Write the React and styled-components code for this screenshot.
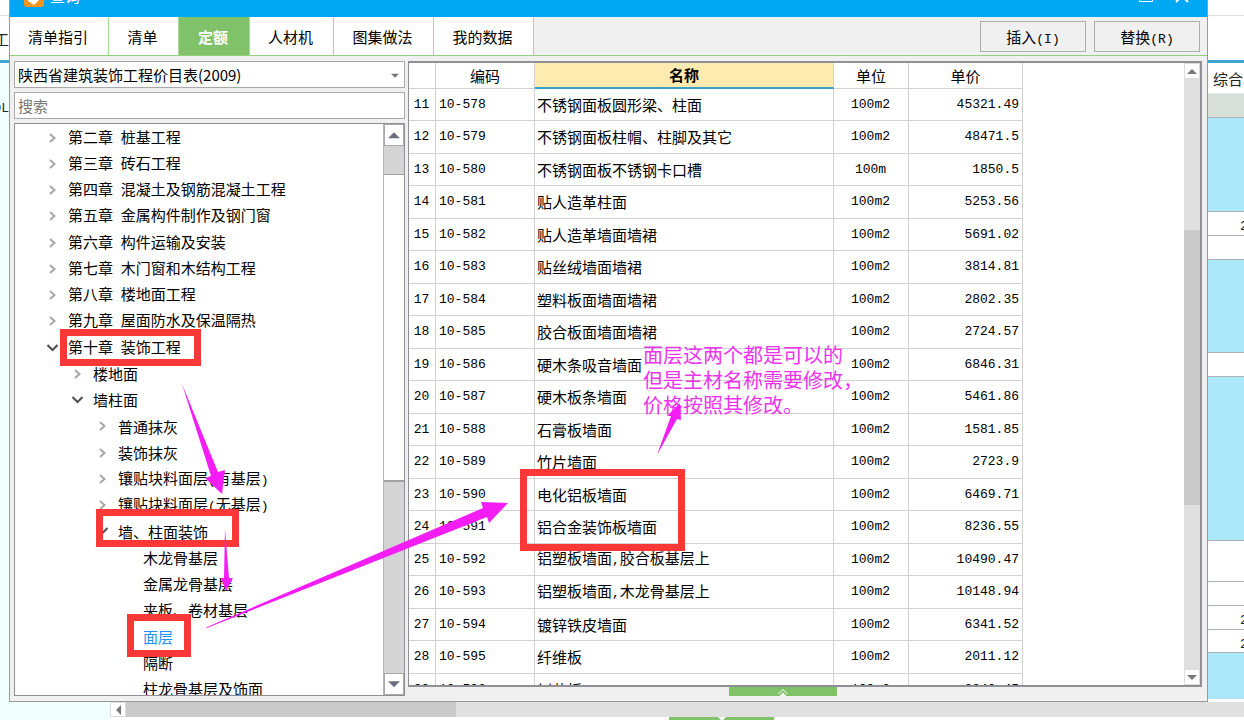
import React from "react";
import styled, { createGlobalStyle } from "styled-components";

const Global = createGlobalStyle`
  * { box-sizing: border-box; }
  body { margin: 0; background: #fff; }
  body, button, input, select {
    font-family: "Noto Sans CJK SC", sans-serif;
    font-size: 15px;
    color: #000;
  }
  button { cursor: pointer; }
`;

const Page = styled.div`
  position: relative;
  display: flex;
  flex-direction: column;
  height: 100vh;
  overflow: hidden;
`;
const Stage = styled.div`
  flex: 1;
  min-height: 0;
  display: grid;
  grid-template-columns: 9px minmax(0, 1fr) 36px;
`;

/* Application window behind the dialog */
const Strip = styled.aside`
  display: flex;
  flex-direction: column;
  overflow: hidden;
  white-space: nowrap;
`;
const StripCell = styled.div`
  flex: none;
  height: ${(p) => p.$h}px;
  background: ${(p) => p.$bg || "#fff"};
  border-bottom: ${(p) => p.$line || 1}px solid ${(p) => p.$edge || "#aab4b4"};
  display: flex;
  align-items: center;
  justify-content: ${(p) => p.$align || "flex-start"};
  padding-left: ${(p) => p.$indent || 0}px;
  color: #222;
`;
const Mono = styled.span`
  font-family: "Liberation Mono", monospace;
  font-size: 13px;
`;
const PageBottom = styled.footer`
  flex: none;
  height: 18px;
  padding-left: 110px;
  background: #f0ffff;
`;
const HScroll = styled.div`
  display: flex;
  height: 15px;
  background: #e0e0e0;
`;
const HThumb = styled.div`
  width: 330px;
  background: #cacaca;
`;
const BottomEdge = styled.div`
  display: flex;
  height: 4px;
  background: #fff;
  padding-left: 559px;
`;

/* Dialog */
const Dialog = styled.main`
  display: flex;
  flex-direction: column;
  min-height: 0;
  background: #f0f0f0;
  border: solid #999;
  border-width: 0 1px 1px;
`;
const TitleBar = styled.header`
  flex: none;
  display: flex;
  align-items: flex-end;
  justify-content: space-between;
  height: 17px;
  padding: 0 18px 10px 14px;
  background: #00a8f3;
  color: #fff;
  overflow: hidden;
`;
const TitleGroup = styled.div`
  display: flex;
  align-items: flex-end;
  gap: ${(p) => p.$gap}px;
`;
const Title = styled.h1`
  margin: 0;
  padding-bottom: 3px;
  font-size: 15px;
  font-weight: 400;
  line-height: 17px;
`;
const TabBar = styled.div`
  flex: none;
  display: flex;
  height: 39px;
  border-bottom: 1px solid #93d080;
`;
const Tab = styled.button`
  flex: none;
  width: ${(p) => p.$w}px;
  padding: 0 2px 0 0;
  border: 0;
  border-right: 1px solid #a6d99a;
  background: ${(p) => (p.$active ? "#80c269" : "#fff")};
  color: ${(p) => (p.$active ? "#fff" : "#000")};
  font-weight: ${(p) => (p.$active ? 700 : 400)};
`;
const Actions = styled.div`
  display: flex;
  align-items: center;
  gap: 8px;
  margin-left: auto;
  padding-right: 7px;
`;
const ActionButton = styled.button`
  width: 106px;
  height: 31px;
  padding: 0;
  border: 1px solid #adadad;
  background: #f0f0f0;
`;
const Body = styled.div`
  flex: 1;
  min-height: 0;
  display: flex;
  gap: 3px;
  padding: 5px 5px 5px 4px;
`;
const Side = styled.section`
  flex: none;
  width: 391px;
  display: flex;
  flex-direction: column;
  gap: 4px;
`;
const SelectWrap = styled.label`
  position: relative;
  display: flex;
  svg { position: absolute; right: 6px; top: 12px; pointer-events: none; }
`;
const Select = styled.select`
  appearance: none;
  width: 100%;
  height: 27px;
  padding: 0 3px;
  border: 1px solid #a9a9ad;
  border-radius: 0;
  background: #fff;
`;
const Search = styled.input`
  flex: none;
  height: 27px;
  padding: 0 3px;
  border: 1px solid #a9a9ad;
  background: #fff;
  &::placeholder { color: #777; opacity: 1; }
`;
const TreeBox = styled.div`
  flex: 1;
  min-height: 0;
  display: flex;
  border: 1px solid #8f9096;
  background: #fff;
`;
const Tree = styled.ul`
  flex: 1;
  min-height: 0;
  margin: 0;
  padding: 1px 0 0;
  list-style: none;
  overflow: hidden;
`;
const TreeItem = styled.li`
  height: 26px;
  &:nth-child(4n) { height: 27px; }
`;
const TreeButton = styled.button`
  display: flex;
  align-items: center;
  gap: 10px;
  width: 100%;
  height: 100%;
  padding: 0 0 0 ${(p) => 32 + p.$level * 25}px;
  border: 0;
  background: none;
  color: ${(p) => (p.$selected ? "#1e90ff" : "#000")};
  text-align: left;
  white-space: pre;
  line-height: 26px;
`;
const TreeScroll = styled.div`
  flex: none;
  width: 21px;
  display: flex;
  flex-direction: column;
  background: #d4d4d4;
  border-left: 1px solid #b4b4b4;
`;
const TreeArrow = styled.button`
  flex: none;
  display: grid;
  place-items: center;
  height: 22px;
  padding: 0;
  border: 1px solid #a9a9ad;
  background: #fff;
`;
const TreeThumb = styled.div`
  height: 308px;
  margin: 28px 0 auto;
  border: solid #a0a0a0;
  border-width: 1px 0 2px;
  background: #fff;
`;

const Main = styled.section`
  flex: 1;
  min-width: 0;
  display: flex;
  flex-direction: column;
`;
const GridBox = styled.div`
  flex: 1;
  min-height: 0;
  display: flex;
  border: 1px solid #8f9096;
  border-width: 2px 2px 2px 1px;
  background: #fff;
`;
const GridView = styled.div`
  flex: 1;
  min-width: 0;
  overflow: hidden;
`;
const Grid = styled.table`
  table-layout: fixed;
  width: 614px;
  border-collapse: separate;
  border-spacing: 0;
`;
const HeadCell = styled.th`
  height: 26px;
  padding: 0;
  border: solid #d0d0d0;
  border-width: 0 1px 1px 0;
  font-weight: ${(p) => (p.$current ? 700 : 400)};
  line-height: 22px;
  ${(p) => p.$current && "background: #ffebb0; border-bottom: 2px solid #3c9fc8;"}
`;
const Row = styled.tr`
  height: 32px;
  &:nth-child(even) { height: 33px; }
`;
const Cell = styled.td`
  padding: 0 3px 0 2px;
  border: solid #d0d0d0;
  border-width: 0 1px 1px 0;
  white-space: nowrap;
  line-height: 22px;
  text-align: ${(p) => p.$align || "left"};
`;
const CodeCell = styled(Cell)`
  padding-left: ${(p) => (p.$align === "center" ? 2 : 3)}px;
  font-family: "Liberation Mono", monospace;
  font-size: 13px;
`;
const GridScroll = styled.div`
  flex: none;
  width: 16px;
  display: flex;
  flex-direction: column;
  background: #e0e0e0;
`;
const ScrollArrow = styled.button`
  flex: none;
  display: grid;
  place-items: center;
  width: 16px;
  height: ${(p) => p.$h || 16}px;
  padding: 0;
  border: 1px solid #ddd;
  background: #fff;
`;
const GridThumb = styled.div`
  height: 275px;
  margin: 151px 0 auto;
  background: #cacaca;
`;
const GridFoot = styled.div`
  flex: none;
  height: 9px;
  padding-left: 321px;
`;
const Handle = styled.button`
  display: flex;
  justify-content: center;
  align-items: flex-end;
  width: ${(p) => p.$w}px;
  height: ${(p) => p.$h}px;
  padding: 0;
  border: 0;
  background: #80c269;
  overflow: hidden;
`;

/* Mark-up drawn on top of the dialog */
const Marker = styled.div`
  position: absolute;
  left: ${(p) => p.$x}px;
  top: ${(p) => p.$y}px;
  width: ${(p) => p.$w}px;
  height: ${(p) => p.$h}px;
  border: 7px solid #fb3838;
  pointer-events: none;
`;
const Arrows = styled.svg`
  position: absolute;
  left: 0;
  top: 0;
  pointer-events: none;
`;
const Note = styled.p`
  position: absolute;
  left: 643px;
  top: 342px;
  margin: 0;
  color: #ee33ee;
  font-size: 20px;
  line-height: 25px;
  white-space: nowrap;
  pointer-events: none;
`;

const Triangle = ({ dir, size = 10, color = "#777" }) => {
  const d = { up: "M0 6 5 1 10 6Z", down: "M0 1 5 6 10 1Z", left: "M6 0 1 5 6 10Z" }[dir];
  return dir === "left" ? (
    <svg width="7" height={size} viewBox="0 0 7 10"><path d={d} fill={color} /></svg>
  ) : (
    <svg width={size} height={size * 0.7} viewBox="0 0 10 7"><path d={d} fill={color} /></svg>
  );
};

const Chevron = ({ state }) => (
  <svg width="11" height="11" viewBox="0 0 11 11" fill="none" strokeWidth="2">
    {state === "closed" && <path d="M3 1 7.5 5 3 9" stroke="#a6a6a6" />}
    {state === "open" && <path d="M0.5 2 5.5 7 10.5 2" stroke="#505050" />}
  </svg>
);

/* Chinese text with its ASCII runs set in the half-width face */
const Mixed = ({ children }) => (
  <span>
    {children.split(/([ -~]+)/).map((part, i) => (i % 2 ? <Mono key={i}>{part}</Mono> : part))}
  </span>
);

const tabs = [
  ["清单指引", 99], ["清单", 70], ["定额", 71], ["人材机", 84], ["图集做法", 100], ["我的数据", 100],
];

const tree = [
  ["第二章 桩基工程", 0, "closed"],
  ["第三章 砖石工程", 0, "closed"],
  ["第四章 混凝土及钢筋混凝土工程", 0, "closed"],
  ["第五章 金属构件制作及钢门窗", 0, "closed"],
  ["第六章 构件运输及安装", 0, "closed"],
  ["第七章 木门窗和木结构工程", 0, "closed"],
  ["第八章 楼地面工程", 0, "closed"],
  ["第九章 屋面防水及保温隔热", 0, "closed"],
  ["第十章 装饰工程", 0, "open"],
  ["楼地面", 1, "closed"],
  ["墙柱面", 1, "open"],
  ["普通抹灰", 2, "closed"],
  ["装饰抹灰", 2, "closed"],
  ["镶贴块料面层(有基层)", 2, "closed"],
  ["镶贴块料面层(无基层)", 2, "closed"],
  ["墙、柱面装饰", 2, "open"],
  ["木龙骨基层", 3],
  ["金属龙骨基层", 3],
  ["夹板、卷材基层", 3],
  ["面层", 3],
  ["隔断", 3],
  ["柱龙骨基层及饰面", 3],
];

const rows = [
  ["不锈钢面板圆形梁、柱面", "100m2", "45321.49"],
  ["不锈钢面板柱帽、柱脚及其它", "100m2", "48471.5"],
  ["不锈钢面板不锈钢卡口槽", "100m", "1850.5"],
  ["贴人造革柱面", "100m2", "5253.56"],
  ["贴人造革墙面墙裙", "100m2", "5691.02"],
  ["贴丝绒墙面墙裙", "100m2", "3814.81"],
  ["塑料板面墙面墙裙", "100m2", "2802.35"],
  ["胶合板面墙面墙裙", "100m2", "2724.57"],
  ["硬木条吸音墙面", "100m2", "6846.31"],
  ["硬木板条墙面", "100m2", "5461.86"],
  ["石膏板墙面", "100m2", "1581.85"],
  ["竹片墙面", "100m2", "2723.9"],
  ["电化铝板墙面", "100m2", "6469.71"],
  ["铝合金装饰板墙面", "100m2", "8236.55"],
  ["铝塑板墙面,胶合板基层上", "100m2", "10490.47"],
  ["铝塑板墙面,木龙骨基层上", "100m2", "10148.94"],
  ["镀锌铁皮墙面", "100m2", "6341.52"],
  ["纤维板", "100m2", "2011.12"],
  ["刨花板", "100m2", "2242.45"],
];

const CYAN = "#ade8fa";
const rightCells = [
  { h: 16, edge: "#ddd" },
  { h: 47, edge: "#3fa5cf", line: 3 },
  { h: 31, text: "综合单价", indent: 5, edge: "#e4e8e4" },
  { h: 24, bg: "#d9e0d9" },
  { h: 94, bg: CYAN },
  { h: 24, text: "2", indent: 32 },
  { h: 24 },
  { h: 93, bg: CYAN },
  { h: 24 },
  { h: 164, bg: CYAN },
  { h: 41 },
  { h: 24 },
  { h: 24, text: "2", indent: 32 },
  { h: 23, text: "2", indent: 32 },
  { h: 46, bg: CYAN, edge: CYAN },
];

export default function App() {
  return (
    <Page>
      <Global />
      <Stage>
        <Strip>
          <StripCell $h={16} $edge="#ddd" />
          <StripCell $h={47} $line={3} $edge="#3fa5cf" $align="flex-end">工</StripCell>
          <StripCell $h={92} $bg="#f0ffff" $edge="#f0ffff" $align="flex-end"><Mono>0L</Mono></StripCell>
          <StripCell $h={548} $bg="#f0ffff" $edge="#f0ffff" />
        </Strip>
        <Dialog>
          <TitleBar>
            <TitleGroup $gap={6}>
              <svg width="20" height="20" viewBox="0 0 20 20">
                <rect width="20" height="20" rx="3" fill="#f7941d" />
                <path d="M3 9 9 12 17 5V11L10 18 4 14Z" fill="#fff" />
              </svg>
              <Title>查询</Title>
            </TitleGroup>
            <TitleGroup $gap={22}>
              <svg width="14" height="20" viewBox="0 0 14 20" fill="none" stroke="#fff" strokeWidth="1">
                <path d="M0.500 4.500H13.500V14.500H0.500Z" />
              </svg>
              <svg width="14" height="20" viewBox="0 0 14 20" fill="none" stroke="#fff" strokeWidth="2">
                <path d="M1 3 13 15M13 3 1 15" />
              </svg>
            </TitleGroup>
          </TitleBar>
          <TabBar>
            {tabs.map(([name, w]) => (
              <Tab key={name} type="button" $w={w} $active={name === "定额"}>{name}</Tab>
            ))}
            <Actions>
              <ActionButton type="button"><Mixed>插入(I)</Mixed></ActionButton>
              <ActionButton type="button"><Mixed>替换(R)</Mixed></ActionButton>
            </Actions>
          </TabBar>
          <Body>
            <Side>
              <SelectWrap>
                <Select aria-label="定额库">
                  <option>陕西省建筑装饰工程价目表(2009)</option>
                </Select>
                <Triangle dir="down" size={8} />
              </SelectWrap>
              <Search type="text" placeholder="搜索" aria-label="搜索" />
              <TreeBox>
                <Tree>
                  {tree.map(([label, level, state]) => (
                    <TreeItem key={label}>
                      <TreeButton type="button" $level={level} $selected={label === "面层"}>
                        <Chevron state={state} />
                        <Mixed>{label}</Mixed>
                      </TreeButton>
                    </TreeItem>
                  ))}
                </Tree>
                <TreeScroll>
                  <TreeArrow type="button" aria-label="向上滚动"><Triangle dir="up" size={12} color="#6d6d80" /></TreeArrow>
                  <TreeThumb />
                  <TreeArrow type="button" aria-label="向下滚动"><Triangle dir="down" size={12} color="#6d6d80" /></TreeArrow>
                </TreeScroll>
              </TreeBox>
            </Side>
            <Main>
              <GridBox>
                <GridView>
                  <Grid>
                    <colgroup>
                      <col width="27" />
                      <col width="99" />
                      <col width="299" />
                      <col width="75" />
                      <col width="114" />
                    </colgroup>
                    <thead>
                      <tr>
                        <HeadCell />
                        <HeadCell>编码</HeadCell>
                        <HeadCell $current>名称</HeadCell>
                        <HeadCell>单位</HeadCell>
                        <HeadCell>单价</HeadCell>
                      </tr>
                    </thead>
                    <tbody>
                      {rows.map(([name, unit, price], i) => (
                        <Row key={name}>
                          <CodeCell $align="center">{11 + i}</CodeCell>
                          <CodeCell>{`10-${578 + i}`}</CodeCell>
                          <Cell><Mixed>{name}</Mixed></Cell>
                          <CodeCell $align="center">{unit}</CodeCell>
                          <CodeCell $align="right">{price}</CodeCell>
                        </Row>
                      ))}
                    </tbody>
                  </Grid>
                </GridView>
                <GridScroll>
                  <ScrollArrow type="button" aria-label="向上滚动"><Triangle dir="up" /></ScrollArrow>
                  <GridThumb />
                  <ScrollArrow type="button" aria-label="向下滚动"><Triangle dir="down" /></ScrollArrow>
                </GridScroll>
              </GridBox>
              <GridFoot>
                <Handle type="button" aria-label="展开" $w={108} $h={9}>
                  <svg width="12" height="8" viewBox="0 0 12 8" fill="none" stroke="#fff">
                    <path d="M1.500 6 6 1.500 10.500 6" /><path d="M3 8 6 5 9 8Z" fill="#fff" />
                  </svg>
                </Handle>
              </GridFoot>
            </Main>
          </Body>
        </Dialog>
        <Strip>
          {rightCells.map(({ h, bg, text, edge, line, indent }, i) => (
            <StripCell key={i} $h={h} $bg={bg} $edge={edge} $line={line} $indent={indent}>
              {text && <Mixed>{text}</Mixed>}
            </StripCell>
          ))}
        </Strip>
      </Stage>
      <PageBottom>
        <HScroll>
          <ScrollArrow type="button" aria-label="向左滚动" $h={15}><Triangle dir="left" /></ScrollArrow>
          <HThumb />
        </HScroll>
        <BottomEdge>
          <Handle type="button" aria-label="收起" $w={105} $h={4}>
            <svg width="10" height="4" viewBox="0 0 10 4"><path d="M1 0H9L5 4Z" fill="#fff" /></svg>
          </Handle>
        </BottomEdge>
      </PageBottom>

      <Marker $x={60} $y={329} $w={141} $h={37} />
      <Marker $x={96} $y={509} $w={143} $h={38} />
      <Marker $x={127} $y={614} $w={64} $h={43} />
      <Marker $x={520} $y={469} $w={165} $h={82} />
      <Note>
        面层这两个都是可以的<br />但是主材名称需要修改，<br />价格按照其修改。
      </Note>
      <Arrows width="900" height="700" viewBox="0 0 900 700" fill="#f51df5">
        <path d="M182 384 218 472 225 470 222 494 205 478 211 476Z" />
        <path d="M225 529 229 578 233 578 226 591 221 578 224 578Z" />
        <path d="M206 627.500 483 508 481 502 508 503 489 523 487 517 207 628Z" />
        <path d="M657 455 671 416 667 416 680 403 681 420 677 419Z" />
      </Arrows>
    </Page>
  );
}
